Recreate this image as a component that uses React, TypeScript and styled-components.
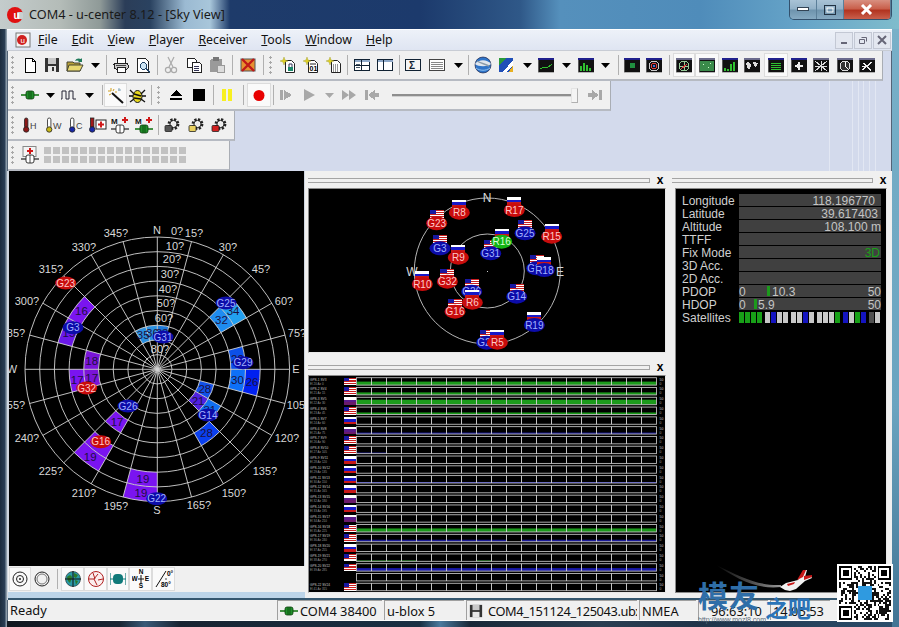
import React from "react";
import styled, { createGlobalStyle } from "styled-components";

const Global = createGlobalStyle`
  html, body { margin: 0; padding: 0; background: #000; }
  #root { width: 899px; height: 627px; }
`;

const UI = `"Noto Sans", "Liberation Sans", sans-serif`;

const Page = styled.div`
  position: relative;
  width: 899px;
  height: 627px;
  overflow: hidden;
  display: flex;
  flex-direction: column;
  font-family: ${UI};
  background:
    linear-gradient(90deg, #1c2c3e 0, #2a3e56 5px, #8a9aa8 6px, #8a9aa8 7px) 0 29px / 7px 100% no-repeat,
    linear-gradient(180deg, #78b0c8 0, #6aa4c0 60%, #3d6e8e 100%) 892px 29px / 7px 100% no-repeat,
    linear-gradient(90deg, #10161e 0, #1a2634 120px, #3a5a78 145px, #182432 180px, #1a3044 420px, #4a7a9e 440px, #182838 470px, #2a3e52 600px, #20344a 700px, #2c4e6c 899px) 0 621px / 100% 6px no-repeat,
    linear-gradient(90deg, #c4cccc 0, #b4bcb8 60px, #8f9a98 100px, #2b3d58 125px, #2a4260 150px, #9bbad2 185px, #a8c6da 210px, #1e3b6a 230px, #1c3a6c 420px, #2f5888 520px, #5590bc 560px, #4f8cba 700px, #66a4c8 800px, #7fbccc 899px);
`;

const TitleBar = styled.div`
  height: 29px;
  display: flex;
  align-items: flex-start;
  padding: 7px 7px 0 7px;
  box-sizing: border-box;
`;
const TitleText = styled.span`
  margin-left: 6px;
  margin-top: -1px;
  font-size: 12.7px;
  line-height: 16px;
  color: #1a1a1a;
`;
const CaptionGroup = styled.div`
  position: absolute;
  left: 789px;
  top: 0;
  width: 103px;
  height: 20px;
  display: flex;
  border: 1px solid #33506c;
  border-top: none;
  border-radius: 0 0 5px 5px;
  box-sizing: border-box;
  overflow: hidden;
`;
const CaptionBtn = styled.div<{ $w: number; $close?: boolean }>`
  width: ${(p) => p.$w}px;
  display: flex;
  align-items: center;
  justify-content: center;
  border-right: 1px solid #5b7f99;
  box-sizing: border-box;
  background: ${(p) =>
    p.$close
      ? "linear-gradient(180deg,#d88f80 0,#c9604c 45%,#b23420 55%,#c9604c 100%)"
      : "linear-gradient(180deg,#a9c3d6 0,#93b2c8 45%,#6f94ae 55%,#86aac2 100%)"};
`;

const Client = styled.div`
  flex: 1;
  margin: 0 7px 6px 7px;
  display: flex;
  flex-direction: column;
  min-height: 0;
  background:
    linear-gradient(90deg, transparent 822px, #e2e7f3 822px, #e2e7f3 823px, transparent 823px, transparent 845px, #e2e7f3 845px, #e2e7f3 846px, transparent 846px, transparent 851px, #e2e7f3 851px, #e2e7f3 852px, transparent 852px, transparent 856px, #e2e7f3 856px, #e2e7f3 857px, transparent 857px, transparent 862px, #e2e7f3 862px, #e2e7f3 863px, transparent 863px, transparent 868px, #e2e7f3 868px, #e2e7f3 869px, transparent 869px),
    #d3daec;
  border-top: 1px solid #ffffff;
  box-shadow: 0 0 0 1px rgba(30, 50, 70, 0.7) inset;
`;
const MenuBar = styled.div`
  height: 21px;
  flex: none;
  display: flex;
  align-items: center;
  padding-left: 8px;
  background: linear-gradient(180deg, #edf1f8 0, #dfe5f2 100%);
  border-bottom: 1px solid #c8ccd4;
  box-sizing: border-box;
  position: relative;
`;
const MenuItem = styled.span`
  margin-left: 14px;
  font-size: 12.3px;
  color: #111;
  line-height: 16px;
  &:first-of-type { margin-left: 6px; }
  u { text-decoration-thickness: 1px; text-underline-offset: 1px; }
`;
const MdiButtons = styled.div`
  margin-left: auto;
  margin-right: 1px;
  display: flex;
  gap: 1px;
`;
const MdiBtn = styled.div`
  width: 18px;
  height: 17px;
  display: flex;
  align-items: center;
  justify-content: center;
  background: #e3e7f0;
  border: 1px solid #c3c8d4;
  box-sizing: border-box;
`;

const ToolbarBand = styled.div`
  height: 30px;
  flex: none;
  margin-left: 1px;
  display: flex;
`;
const Toolbar = styled.div<{ $w: number }>`
  width: ${(p) => p.$w}px;
  display: flex;
  align-items: center;
  background: #f0f0f0;
  border-right: 1px solid #a9adb4;
  border-bottom: 2px solid #b6bac2;
  box-sizing: border-box;
`;
const Grip = styled.div`
  width: 11px;
  height: 20px;
  flex: none;
  margin-left: 0;
  background-image: radial-gradient(circle at 1.5px 1.5px, #a8a8a8 1px, transparent 1.2px);
  background-size: 3px 5px;
  background-position: 3px 1px;
  background-repeat: repeat-y;
`;
const Cell = styled.div<{ $w: number; $on?: boolean }>`
  width: ${(p) => p.$w}px;
  height: 24px;
  flex: none;
  display: flex;
  align-items: center;
  justify-content: center;
  box-sizing: border-box;
  ${(p) => p.$on && "background:#fafafa; box-shadow: inset 0 0 0 1px #dcdcdc;"}
`;
const Sep = styled.div<{ $w: number }>`
  width: ${(p) => p.$w}px;
  height: 20px;
  flex: none;
  position: relative;
  &::after {
    content: "";
    position: absolute;
    left: 50%;
    top: 0;
    bottom: 0;
    width: 1px;
    background: #b0b0b0;
  }
`;
const SliderTrack = styled.div`
  position: relative;
  width: 186px;
  height: 2px;
  margin: 0 9px 0 8px;
  flex: none;
  background: #8e8e8e;
  border-bottom: 1px solid #d0d0d0;
`;
const SliderThumb = styled.div`
  position: absolute;
  right: 0;
  top: -6px;
  width: 5px;
  height: 13px;
  background: #f4f4f4;
  border: 1px solid #b0b0b0;
  border-left-color: #e4e4e4;
  border-top-color: #e4e4e4;
`;
const DotGrid = styled.div`
  display: grid;
  grid-template-columns: repeat(16, 7px);
  grid-auto-rows: 7px;
  gap: 2px;
  margin-left: 4px;
`;
const Dot = styled.div`
  background: #c2c2c2;
`;

const Body = styled.div`
  flex: 1;
  min-height: 0;
  display: flex;
`;
const SkyCol = styled.div`
  width: 298px;
  flex: none;
  margin-left: 0;
  display: flex;
  flex-direction: column;
  padding-left: 2px;
  box-sizing: border-box;
  background: #cfd6e0;
`;
const Canvas = styled.svg`
  display: block;
  background: #000;
  flex: none;
`;
const SkyTools = styled.div`
  height: 26px;
  flex: none;
  margin-left: -1px;
  display: flex;
  align-items: center;
  background: #f0f0f0;
  padding-left: 1px;
`;
const Band = styled.div`
  flex: 1;
  margin-left: -1px;
  background: #bcd4e8;
  border-bottom: 2px solid #34566e;
  box-sizing: border-box;
`;
const SideCol = styled.div<{ $w?: number }>`
  ${(p) => (p.$w ? `width:${p.$w}px; flex:none;` : "flex:1;")}
  display: flex;
  flex-direction: column;
  background: #f0f0f0;
  padding: 1px 3px 0 3px;
  border-bottom: 2px solid #34566e;
  box-sizing: border-box;
`;
const PaneHeader = styled.div`
  height: 16px;
  flex: none;
  display: flex;
  align-items: center;
  gap: 4px;
`;
const GripLines = styled.div`
  flex: 1;
  height: 3px;
  border-top: 1px solid #a4a4a4;
  border-bottom: 1px solid #a4a4a4;
  border-right: 1px solid #a4a4a4;
`;
const CloseX = styled.span`
  width: 12px;
  font: bold 12px/12px "Liberation Sans", sans-serif;
  color: #000;
  text-align: center;
  flex: none;
`;
const PaneCanvas = styled.div<{ $h: number }>`
  height: ${(p) => p.$h}px;
  flex: none;
  background: #000;
  border: 1px solid #8a8a8a;
  border-right-color: #e8e8e8;
  border-bottom-color: #e8e8e8;
  box-sizing: border-box;
  overflow: hidden;
`;
const Spacer = styled.div<{ $h: number }>`
  height: ${(p) => p.$h}px;
  flex: none;
`;

const DataPanel = styled.div`
  width: 212px;
  margin-left: 3px;
  height: 405px;
  flex: none;
  background: #000;
  border: 1px solid #8a8a8a;
  border-right-color: #e8e8e8;
  box-sizing: border-box;
  padding: 5px 0 0 6px;
  display: flex;
  flex-direction: column;
  gap: 1px;
`;
const DataRow = styled.div`
  display: flex;
  height: 12px;
  align-items: center;
`;
const DataLabel = styled.span`
  width: 57px;
  flex: none;
  padding-top: 1px;
  font: 12px/12px "Liberation Sans", sans-serif;
  color: #d0d0d0;
`;
const DataField = styled.div<{ $pad?: number; $color?: string }>`
  width: 142px;
  height: 12px;
  background: #404040;
  display: flex;
  align-items: center;
  justify-content: flex-end;
  padding-right: ${(p) => p.$pad ?? 0}px;
  padding-top: 1px;
  box-sizing: border-box;
  font: 12px/12px "Liberation Sans", sans-serif;
  color: ${(p) => p.$color ?? "#c4c4c4"};
`;
const GaugeField = styled(DataField)`
  position: relative;
  justify-content: space-between;
`;
const GaugeBar = styled.span<{ $x: number }>`
  position: absolute;
  left: ${(p) => p.$x}px;
  top: 1px;
  width: 3px;
  height: 10px;
  background: #1c9a1c;
`;
const GaugeValue = styled.span<{ $x: number }>`
  position: absolute;
  left: ${(p) => p.$x}px;
  top: 1px;
`;
const SatStrip = styled.div`
  display: flex;
  gap: 3px;
`;
const SatGroup = styled.div`
  display: flex;
  gap: 1px;
`;
const SatTick = styled.div<{ $c: string }>`
  width: 5px;
  height: 11px;
  background: ${(p) => p.$c};
`;

const StatusBar = styled.div`
  height: 21px;
  flex: none;
  display: flex;
  margin-left: 1px;
  background: #f0f0f0;
  border-bottom: 1px solid #fff;
  box-sizing: border-box;
  align-items: stretch;
  font-size: 12.8px;
  color: #111;
`;
const StatusPane = styled.div<{ $w: number; $first?: boolean; $pad?: number; $gap?: number }>`
  width: ${(p) => p.$w}px;
  flex: none;
  display: flex;
  align-items: center;
  gap: ${(p) => p.$gap ?? 4}px;
  box-sizing: border-box;
  padding-left: ${(p) => p.$pad ?? 2}px;
  margin-right: 2px;
  white-space: nowrap;
  overflow: hidden;
  ${(p) => !p.$first && "border-left:1px solid #a0a0a0; border-top:1px solid #a0a0a0;"}
`;
const FileName = styled.span`
  letter-spacing: -0.36px;
`;
const FileIcon = styled.svg`
  flex: none;
`;

const Watermark = styled.div`
  position: absolute;
  left: 696px;
  top: 562px;
  width: 203px;
  height: 65px;
  pointer-events: none;
`;
const MarkBig = styled.span`
  position: absolute;
  left: 2px;
  top: 14px;
  font: 700 30px/36px "Noto Sans CJK SC", sans-serif;
  color: #2f6ea8;
  letter-spacing: 1px;
  white-space: nowrap;
`;
const MarkSmall = styled.span`
  position: absolute;
  left: 69px;
  top: 31px;
  font: 700 23px/28px "Noto Sans CJK SC", sans-serif;
  color: #2b74b8;
  white-space: nowrap;
`;
const MarkUrl = styled.span`
  position: absolute;
  left: 2px;
  top: 53px;
  font: 7px/9px "Liberation Sans", sans-serif;
  color: #5a6a78;
  white-space: nowrap;
`;
const PlaneArt = styled.svg`
  position: absolute;
  left: 0;
  top: 0;
`;
const QrBox = styled.svg`
  position: absolute;
  left: 141px;
  top: 2px;
`;

/* ---------- icons ---------- */
const Ic: React.FC<{ s?: number; children: React.ReactNode }> = ({ s = 16, children }) => (
  <svg width={s} height={s} viewBox="0 0 16 16" shapeRendering="crispEdges">
    {children}
  </svg>
);
const Arrow = () => (
  <svg width="9" height="5" viewBox="0 0 9 5">
    <path d="M0 0h9L4.5 5z" fill="#000" />
  </svg>
);
const GrayArrow = () => (
  <svg width="9" height="5" viewBox="0 0 9 5">
    <path d="M0 0h9L4.5 5z" fill="#a8a8a8" />
  </svg>
);
const Win: React.FC<{ children?: React.ReactNode; t?: string }> = ({ children, t = "#20208c" }) => (
  <Ic>
    <rect x="0" y="1" width="16" height="14" fill="#111" stroke="#8a8a8a" strokeWidth="0.6" />
    <rect x="0" y="1" width="16" height="2" fill={t} />
    {children}
  </Ic>
);
const Page16: React.FC<{ children?: React.ReactNode }> = ({ children }) => (
  <svg width="18" height="17" viewBox="0 0 18 17">
    <path d="M6.500 3.500h6l3 3v9h-9z" fill="#fff" stroke="#222" />
    <path d="M5 0l1 3 3 1-3 1-1 3-1-3-3-1 3-1z" fill="#e0d020" stroke="#9a9a30" strokeWidth="0.4" />
    {children}
  </svg>
);
const Thermo: React.FC<{ c: string; l?: string }> = ({ c, l }) => (
  <svg width="18" height="16" viewBox="0 0 18 16">
    <rect x="2.5" y="1" width="3.4" height="10" rx="1.7" fill={l === "H" ? c : "#fff"} stroke="#222" strokeWidth="0.8" />
    <circle cx="4.2" cy="12.5" r="2.7" fill={c} stroke="#222" strokeWidth="0.8" />
    {l && (
      <text x="8" y="12" fontSize="9" fontFamily="Liberation Sans" fill="#444">
        {l}
      </text>
    )}
  </svg>
);
const Conn: React.FC = () => (
  <svg width="18" height="10" viewBox="0 0 18 10">
    <path d="M0 5h18" stroke="#1a7a1a" strokeWidth="1.6" />
    <rect x="5" y="1" width="8" height="8" rx="2" fill="#1f8f2a" stroke="#0a3a0a" strokeWidth="0.8" />
    <path d="M8 1.5v7M10 1.5v7" stroke="#0a3a0a" strokeWidth="0.7" />
  </svg>
);
const Plug: React.FC = () => (
  <svg width="18" height="10" viewBox="0 0 18 10">
    <path d="M0 5h18" stroke="#222" strokeWidth="1.2" />
    <rect x="5" y="1" width="8" height="8" rx="2" fill="#fff" stroke="#222" strokeWidth="0.9" />
    <path d="M9 1v8" stroke="#222" strokeWidth="0.8" />
  </svg>
);
const Plus = ({ x = 0, y = 0 }) => <path d={`M${x + 2} ${y}h2v2h2v2h-2v2h-2v-2h-2v-2h2z`} fill="#d01818" />;
const Gear: React.FC<{ c: string }> = ({ c }) => (
  <svg width="18" height="16" viewBox="0 0 18 16">
    <circle cx="10.500" cy="7" r="4.600" fill="none" stroke="#222" strokeWidth="2.600" strokeDasharray="2.200 1.400" />
    <circle cx="10.500" cy="7" r="3.600" fill="none" stroke="#222" strokeWidth="1" />
    <circle cx="10.500" cy="7" r="1.400" fill="#e8e8e8" />
    <rect x="2" y="8.500" width="7" height="6" rx="1" fill={c} stroke="#222" strokeWidth="0.8" />
  </svg>
);

const icons: Record<string, React.ReactNode> = {
  doc: <Ic><path d="M3 1h7l3 3v11H3z" fill="#fff" stroke="#000" /><path d="M10 1v3h3" fill="none" stroke="#000" /></Ic>,
  save: <Ic><rect x="1" y="1" width="14" height="14" fill="#333" /><rect x="4" y="1" width="8" height="6" fill="#c8c8c8" /><rect x="4" y="9" width="8" height="6" fill="#e8e8e8" /><rect x="8" y="10" width="2" height="4" fill="#333" /></Ic>,
  open: <svg width="18" height="16" viewBox="0 0 18 16"><path d="M1 5h6l1 1h6v8H1z" fill="#b8a038" stroke="#443" /><path d="M3 8h14l-3 6H1z" fill="#e8d870" stroke="#443" /><path d="M9 4c1-3 4-3 6-2l1-1v4h-4l1-1c-1-.7-3-.7-4 0z" fill="#1f7a5a" /></svg>,
  print: <Ic><path d="M4 1h8v5H4z" fill="#fff" stroke="#222" /><rect x="1" y="6" width="14" height="6" rx="1.5" fill="#ccc" stroke="#222" /><path d="M4 10h8v5H4z" fill="#fff" stroke="#222" /><path d="M3 8h10" stroke="#444" /></Ic>,
  preview: <Ic><path d="M2 1h8l3 3v11H2z" fill="#fff" stroke="#222" /><circle cx="8.5" cy="9" r="3.2" fill="#cfe6f4" stroke="#246" /><path d="M11 11.5l4 4" stroke="#246" strokeWidth="2" /></Ic>,
  cut: <svg width="16" height="18" viewBox="0 0 16 18"><path d="M5 1l5 10M11 1L6 11" stroke="#aaa" strokeWidth="1.2" fill="none" /><circle cx="5" cy="14" r="2.6" fill="none" stroke="#aaa" strokeWidth="1.2" /><circle cx="11" cy="14" r="2.6" fill="none" stroke="#aaa" strokeWidth="1.2" /></svg>,
  copy: <Ic><path d="M1 1h7l2 2v7H1z" fill="#fff" stroke="#222" /><path d="M6 5h7l2 2v8H6z" fill="#fff" stroke="#222" /><path d="M8 9h5M8 11h5M8 13h5" stroke="#335" /></Ic>,
  paste: <Ic><rect x="1" y="2" width="12" height="13" rx="2" fill="#9a9a9a" /><rect x="4" y="0" width="6" height="4" rx="1" fill="#777" /><rect x="8" y="8" width="7" height="7" fill="#dcdcdc" stroke="#999" /></Ic>,
  kill: <svg width="18" height="16" viewBox="0 0 18 16"><rect x="2" y="2" width="14" height="12" fill="#e89030" stroke="#555" /><path d="M3 2l12 12M15 2L3 14" stroke="#c01818" strokeWidth="2.4" /></svg>,
  new1: <Page16><rect x="9" y="10" width="5" height="4" fill="#1c8a6c" /><path d="M10 10V7h3v3" fill="none" stroke="#335" /></Page16>,
  new2: <Page16><text x="7.500" y="14" fontSize="7" fontFamily="Liberation Sans" fontWeight="700" fill="#000">01</text><path d="M8 7h6" stroke="#222" /></Page16>,
  new3: <Page16><path d="M8 8h6M8 10h6M8 12h6M8 14h6" stroke="#333" strokeDasharray="1 1" /></Page16>,
  lay1: <Ic><rect x="0.5" y="2.5" width="15" height="11" fill="#fff" stroke="#123" /><rect x="0.5" y="2.5" width="15" height="2" fill="#8ea8c8" /><path d="M7 3v10M1 8h14" stroke="#123" /><path d="M2 7h4M2 10h4" stroke="#456" /></Ic>,
  lay2: <Ic><rect x="0.5" y="2.5" width="15" height="11" fill="#fff" stroke="#123" /><rect x="0.5" y="2.5" width="15" height="2" fill="#8ea8c8" /><path d="M6 3v10" stroke="#123" /></Ic>,
  sigma: <Ic><rect x="0.5" y="2.5" width="15" height="11" fill="#f4f4f4" stroke="#123" /><text x="4" y="12" fontSize="10" fontFamily="Liberation Sans" fontWeight="700" fill="#123">Σ</text></Ic>,
  table: <Ic><rect x="0.5" y="2.5" width="15" height="11" fill="#fff" stroke="#444" /><path d="M2 5h12M2 7h12M2 9h12M2 11h12" stroke="#888" /></Ic>,
  globe: <svg width="18" height="18" viewBox="0 0 18 18"><circle cx="9" cy="9" r="8" fill="#2f74c8" stroke="#113" strokeWidth="0.6" /><path d="M1 8c4-5 12-5 16 0-3 3-13 3-16 0z" fill="#dfe6ee" /><path d="M3 5c3 2 8 3 12 5" stroke="#8a9aa8" strokeWidth="1.4" fill="none" /><path d="M2 12c4 3 10 3 14 0" stroke="#8ec0f0" strokeWidth="1" fill="none" /></svg>,
  map: <Ic><rect x="1" y="1" width="14" height="14" fill="#1f4fb8" /><path d="M1 1h7L1 9z" fill="#2a9a3a" /><path d="M5 15L15 3v5l-6 7z" fill="#fff" /><path d="M15 8v7h-4z" fill="#e8b020" /></Ic>,
  wchart: <Win><path d="M2 12l4-2 3 1 5-4" stroke="#30c030" fill="none" /></Win>,
  wbars: <Win><path d="M3 14V9M6 14V6M9 14V8M12 14V11" stroke="#30c030" strokeWidth="2" /></Win>,
  wdot: <Win><rect x="6" y="6" width="5" height="5" fill="#209040" /></Win>,
  wsky: <Win><circle cx="8" cy="9" r="5" fill="none" stroke="#ccc" /><circle cx="8" cy="9" r="2.6" fill="none" stroke="#e04040" /><circle cx="8" cy="9" r="1" fill="#4070e0" /></Win>,
  wpolar: <Win t="#6a6a8c"><circle cx="8" cy="9" r="5" fill="none" stroke="#9c9" /><path d="M3 9h10M8 4v10" stroke="#9c9" /><path d="M5 12l6-5" stroke="#e04040" /></Win>,
  wgreen: <Win t="#6a6a8c"><rect x="1" y="4" width="14" height="10" fill="#3a8a4a" /><path d="M4 7h1M9 10h1M11 6h1" stroke="#cfc" /></Win>,
  wbars2: <Win><path d="M3 14v-3M6 14v-2M9 14V7M12 14V5" stroke="#30c030" strokeWidth="2.2" /></Win>,
  wworld: <Win t="#6a6a8c"><path d="M2 6c3-2 5 0 5 3l-2 4-2-3zM9 5l5 1-2 4-2-1z" fill="#ddd" /></Win>,
  wlist: <Win><path d="M3 6h10M3 8h10M3 10h10M3 12h10" stroke="#30c030" /></Win>,
  wstar: <Win><path d="M8 4l1.5 3.5L13 9l-3.5 1.5L8 14l-1.5-3.5L3 9l3.5-1.5z" fill="#eee" /></Win>,
  wburst: <Win t="#6a6a8c"><path d="M2 4l12 10M14 4L2 14M8 4v10M2 9h12" stroke="#ddd" /></Win>,
  wclock: <Win t="#6a6a8c"><circle cx="8" cy="9" r="5" fill="#333" stroke="#ddd" /><path d="M8 9V5M8 9l3 3" stroke="#fff" /></Win>,
  wx: <Win t="#6a6a8c"><path d="M3 13L13 5M4 6l8 7" stroke="#eee" strokeWidth="1.4" /><path d="M3 9h4" stroke="#eee" /></Win>,
  conn: <Conn />,
  pulse: <svg width="16" height="10" viewBox="0 0 16 10"><path d="M0 9h1V1h4v8h3V1h4v8h3" fill="none" stroke="#223" strokeWidth="1" /></svg>,
  wand: <svg width="17" height="17" viewBox="0 0 17 17"><path d="M5 6l11 10" stroke="#111" strokeWidth="2" /><path d="M4 1v3M1 4h3M7 2l-1 2M10 5l-2 0M2 8l2-1" stroke="#d0a020" strokeWidth="1" /><path d="M11 3h3M12 1v3" stroke="#8ab" /></svg>,
  bug: <svg width="17" height="17" viewBox="0 0 17 17"><ellipse cx="8.5" cy="9.5" rx="4.5" ry="6" fill="#e8d820" stroke="#111" /><path d="M1 3l4 4M16 3l-4 4M1 15l4-3M16 15l-4-3M0 9h4M13 9h4" stroke="#111" strokeWidth="1.3" /><path d="M5 7l7 2M5 11l7 1" stroke="#111" strokeWidth="1.4" /></svg>,
  eject: <Ic><path d="M8 3l6 6H2z" fill="#000" /><rect x="2" y="11" width="12" height="2.4" fill="#000" /></Ic>,
  stop: <Ic><rect x="2" y="2" width="12" height="12" fill="#000" /></Ic>,
  pause: <Ic><rect x="3" y="2" width="4" height="12" fill="#f8f020" /><rect x="9" y="2" width="4" height="12" fill="#f8f020" /></Ic>,
  rec: <svg width="16" height="16" viewBox="0 0 16 16"><circle cx="8" cy="8.5" r="5.5" fill="#e80000" /></svg>,
  step: <Ic><rect x="2" y="3" width="2.5" height="10" fill="#a8a8a8" /><path d="M6 3l8 5-8 5z" fill="#a8a8a8" /></Ic>,
  play: <svg width="16" height="16" viewBox="0 0 16 16"><path d="M3 2l11 6-11 6z" fill="#a8a8a8" /></svg>,
  gdrop: <GrayArrow />,
  ff: <svg width="16" height="16" viewBox="0 0 16 16"><path d="M1 3l7 5-7 5zM8 3l7 5-7 5z" fill="#a8a8a8" /></svg>,
  rew: <Ic><rect x="1" y="3" width="2.5" height="10" fill="#a8a8a8" /><path d="M11 3v3h4v4h-4v3L4 8z" fill="#a8a8a8" /></Ic>,
  end: <Ic><rect x="12" y="3" width="2.5" height="10" fill="#a8a8a8" /><path d="M5 3v3H1v4h4v3l7-5z" fill="#a8a8a8" /></Ic>,
  thH: <Thermo c="#8a1818" l="H" />,
  thW: <Thermo c="#c8b818" l="W" />,
  thC: <Thermo c="#1828a8" l="C" />,
  thP: <svg width="18" height="16" viewBox="0 0 18 16"><rect x="1.5" y="1" width="3.4" height="9" fill="#a01818" stroke="#222" strokeWidth="0.8" /><circle cx="3.2" cy="12.5" r="2.7" fill="#1828a8" stroke="#222" strokeWidth="0.8" /><rect x="7" y="3" width="10" height="9" fill="#fff" stroke="#222" /><g transform="translate(9 4.500)"><Plus /></g></svg>,
  mp1: <svg width="18" height="18" viewBox="0 0 18 18"><text x="0" y="8" fontSize="8" fontFamily="Liberation Sans" fontWeight="700" fill="#111">M</text><g transform="translate(11 1)"><Plus /></g><g transform="translate(0 8)"><Plug /></g></svg>,
  mp2: <svg width="18" height="18" viewBox="0 0 18 18"><text x="0" y="8" fontSize="8" fontFamily="Liberation Sans" fontWeight="700" fill="#111">M</text><g transform="translate(11 1)"><Plus /></g><g transform="translate(0 8)"><Conn /></g></svg>,
  g1: <Gear c="#555" />,
  g2: <Gear c="#e8d060" />,
  g3: <Gear c="#d02020" />,
  addPlug: <svg width="18" height="18" viewBox="0 0 18 18"><rect x="2" y="0.500" width="13" height="10" fill="#f4f4f4" stroke="#888" /><g transform="translate(6 2)"><Plus /></g><g transform="translate(0 8)"><Plug /></g></svg>,
  rings: <svg width="16" height="16" viewBox="0 0 16 16"><circle cx="8" cy="8" r="7" fill="none" stroke="#222" /><circle cx="8" cy="8" r="3.5" fill="none" stroke="#222" /><circle cx="8" cy="8" r="1" fill="#222" /></svg>,
  ring2: <svg width="16" height="16" viewBox="0 0 16 16"><circle cx="8" cy="8" r="7" fill="none" stroke="#222" /><circle cx="8" cy="8" r="5" fill="none" stroke="#777" /></svg>,
  earth: <svg width="16" height="16" viewBox="0 0 16 16"><circle cx="8" cy="8" r="7.500" fill="#2a9aa8" stroke="#222" strokeWidth="0.6" /><path d="M2 6c3-3 5-2 5 1l-2 5-2-2zM9 2l4 2-2 3-2-1zM10 9l3 1-2 4z" fill="#2a7a2a" /><path d="M8 0v16M0 8h16" stroke="#111" strokeWidth="1" /></svg>,
  redball: <svg width="16" height="16" viewBox="0 0 16 16"><circle cx="8" cy="8" r="7.500" fill="#fbeeee" stroke="#b02020" /><path d="M1 8h5l4-5M6 8l3 6M10 9l5-1M5 2l2 6" stroke="#b02020" fill="none" /></svg>,
  teal: <svg width="16" height="14" viewBox="0 0 16 14"><path d="M0 1v12M16 1v12M0 7h16" stroke="#107a7a" strokeWidth="1.2" /><rect x="3" y="2" width="10" height="10" rx="4" fill="#107a7a" /></svg>,
  compass: <svg width="18" height="20" viewBox="0 0 18 20" fontFamily="Liberation Sans" fontWeight="700" fontSize="6.500" textAnchor="middle"><text x="9" y="5">N</text><text x="2.500" y="12">W</text><text x="15" y="12">E</text><text x="9" y="19">S</text><path d="M9 6v8M6 10h6" stroke="#111" /></svg>,
  angle: <svg width="20" height="20" viewBox="0 0 20 20" fontFamily="Liberation Sans" fontSize="6.500" fontWeight="700"><path d="M2 18L12 2" stroke="#111" /><text x="13" y="7">0°</text><text x="7" y="18">80°</text><circle cx="12" cy="10" r="0.7" /></svg>,
  logo: <svg width="17" height="17" viewBox="0 0 17 17"><rect x="1" y="1" width="14" height="14" fill="#f4f4f4" stroke="#777" /><circle cx="7" cy="8" r="5" fill="#d02020" /><text x="5.400" y="11" fontSize="8" fontFamily="Liberation Sans" fill="#fff">u</text></svg>,
};

type Item = [string, number, boolean?] | number;
const bar1: Item[] = [
  ["doc", 22], ["save", 22], ["open", 24], ["arrow", 16], 6, ["print", 23], ["preview", 22], 6, ["cut", 22], ["copy", 24], ["paste", 22], 8, ["kill", 24], 6,
];
const bar1b: Item[] = [
  ["new1", 21], ["new2", 25], ["new3", 22], 4, ["lay1", 25], ["lay2", 22], 6, ["sigma", 22], ["table", 26], ["arrow", 16], 4, ["globe", 26], ["map", 20], ["arrow", 22], ["wchart", 16], ["arrow", 24], ["wbars", 16], ["arrow", 22], 4, ["wdot", 24], ["wsky", 20], 9, ["wpolar", 22, true], ["wgreen", 24, true], ["wbars2", 21], ["wworld", 24], ["wlist", 24, true], ["wstar", 21], ["wburst", 24], ["wclock", 23], ["wx", 22],
];
const bar2: Item[] = [
  ["conn", 22], ["arrow", 18], ["pulse", 20], ["arrow", 21], 4, ["wand", 23, true], ["bug", 21], 6,
];
const bar2b: Item[] = [
  ["eject", 22], ["stop", 24], 4, ["pause", 24], 8, ["rec", 24, true], 3, ["step", 24], ["play", 22], ["gdrop", 18], ["ff", 22], ["rew", 24],
];
const bar3: Item[] = [
  ["thH", 23], ["thW", 23], ["thC", 23], ["thP", 20], ["mp1", 24], ["mp2", 24], 4, ["g1", 24], ["g2", 23], ["g3", 24],
];
const barSky: Item[] = [
  ["rings", 22, true], ["ring2", 22], 8, ["earth", 23, true], ["redball", 23, true], ["teal", 22, true], ["compass", 23, true], ["angle", 23, true],
];
icons.arrow = <Arrow />;

const Items: React.FC<{ list: Item[] }> = ({ list }) => (
  <>
    {list.map((it, i) =>
      typeof it === "number" ? (
        <Sep key={i} $w={it} />
      ) : (
        <Cell key={i} $w={it[1]} $on={it[2]}>
          {icons[it[0]]}
        </Cell>
      )
    )}
  </>
);

/* ---------- polar plot ---------- */
const CX = 157.3;
const CY = 369.3;
const RING = 14.7;
const pt = (r: number, az: number): [number, number] => {
  const a = (az * Math.PI) / 180;
  return [CX + r * Math.sin(a), CY - r * Math.cos(a)];
};
const sector = (a1: number, a2: number, r1: number, r2: number) => {
  const [x1, y1] = pt(r2, a1);
  const [x2, y2] = pt(r2, a2);
  const [x3, y3] = pt(r1, a2);
  const [x4, y4] = pt(r1, a1);
  return `M${x1} ${y1}A${r2} ${r2} 0 0 1 ${x2} ${y2}L${x3} ${y3}A${r1} ${r1} 0 0 0 ${x4} ${y4}Z`;
};
const PURPLE = "#7a14f0";
const cells: [number, number, number, string, string][] = [
  [300, 6, 7, PURPLE, "16"],
  [285, 6, 7, "#6a18e8", "15"],
  [270, 4, 5, "#7a14d8", "18"],
  [255, 4, 5, "#7a14d8", "17"],
  [255, 5, 6, PURPLE, "17"],
  [330, 2, 3, "#2a90e0", "35"],
  [345, 2, 3, "#2a90e0", "36"],
  [0, 2, 3, "#1c78d8", "33"],
  [45, 5, 6, "#1f8cf0", "32"],
  [45, 6, 7, "#22a0f0", "34"],
  [75, 5, 6, "#0c50e8", "22"],
  [90, 5, 6, "#0e70f8", "30"],
  [90, 6, 7, "#0020f0", "26"],
  [105, 3, 4, "#1050e8", "28"],
  [120, 3, 4, "#5020e0", "21"],
  [120, 4, 5, "#1070f0", "31"],
  [135, 5, 6, "#0a40f0", "28"],
  [210, 4, 5, PURPLE, "17"],
  [210, 6, 7, PURPLE, ""],
  [210, 7, 8, PURPLE, "19"],
  [180, 7, 8, PURPLE, "19"],
  [180, 8, 9, PURPLE, "19"],
];
const polarSats: [string, number, number, string][] = [
  ["G23", 65.7, 283, "r"], ["G25", 226, 303, "b"], ["G3", 73, 327.7, "b"], ["G31", 163, 337, "b"], ["G29", 243, 362.7, "b"],
  ["G32", 86.7, 388, "r"], ["G26", 128, 406, "b"], ["G14", 208, 415, "b"], ["G16", 100.7, 441.7, "r"], ["G22", 156.7, 498.7, "b"],
];
const polarLabels: [string, number, number][] = [
  ["N", 157, 230], ["0?", 177, 231], ["15?", 194, 233], ["30?", 228, 247], ["45?", 261, 269], ["60?", 284, 301], ["75?", 297, 333], ["E", 296, 369],
  ["105?", 299, 405], ["120?", 287, 438], ["135?", 265, 471], ["150?", 234, 493], ["165?", 199, 505], ["S", 157, 510], ["195?", 116, 506], ["210?", 84, 493],
  ["225?", 51, 471], ["240?", 27, 438], ["255?", 13, 405], ["W", 12, 369], ["285?", 13, 333], ["300?", 27, 301], ["315?", 51, 269], ["330?", 84, 247], ["345?", 116, 233],
  ["10?", 175, 246], ["20?", 172, 259], ["30?", 170, 274], ["40?", 168, 289], ["50?", 166, 303], ["60?", 164, 318], ["80?", 160, 349],
];
const satFill: Record<string, [string, string]> = {
  r: ["#c80c0c", "#ffc8c8"],
  b: ["#0c0ca8", "#a0b0ff"],
  g: ["#14b414", "#d8ffd8"],
};

const Polar = () => (
  <Canvas width={295} height={395} viewBox="9 171 295 395" fontFamily="Liberation Sans">
    {cells.map(([a, r1, r2, c], i) => (
      <path key={i} d={sector(a, a + 15, r1 * RING, r2 * RING)} fill={c} />
    ))}
    <g stroke="#d4d4d4" strokeWidth="0.9" fill="none">
      {Array.from({ length: 9 }, (_, i) => (
        <circle key={i} cx={CX} cy={CY} r={(i + 1) * RING} />
      ))}
      {Array.from({ length: 24 }, (_, i) => {
        const [x, y] = pt(9 * RING, i * 15);
        return <line key={i} x1={CX} y1={CY} x2={x} y2={y} />;
      })}
    </g>
    {cells.map(([a, r1, r2, , t], i) => {
      const [x, y] = pt(((r1 + r2) / 2) * RING, a + 7.5);
      return (
        <text key={i} x={x} y={y + 4} fontSize="11.500" textAnchor="middle" fill="#1c1040">
          {t}
        </text>
      );
    })}
    {polarLabels.map(([t, x, y], i) => (
      <text key={i} x={x} y={y + 4} fontSize="11" textAnchor="middle" fill="#d8d8d8">
        {t}
      </text>
    ))}
    {polarSats.map(([t, x, y, k]) => (
      <g key={t}>
        <ellipse cx={x} cy={y} rx="10.500" ry="6.500" fill={satFill[k][0]} />
        <text x={x} y={y + 3.500} fontSize="10" textAnchor="middle" fill={satFill[k][1]}>
          {t}
        </text>
      </g>
    ))}
  </Canvas>
);

/* ---------- flags ---------- */
const FlagUS: React.FC<{ x: number; y: number; w?: number; h?: number }> = ({ x, y, w = 14, h = 8 }) => (
  <g shapeRendering="crispEdges">
    <rect x={x} y={y} width={w} height={h} fill="#fff" />
    {[0, 2, 4, 6].map((k) => (
      <rect key={k} x={x} y={y + (k * h) / 8} width={w} height={h / 8} fill="#c82020" />
    ))}
    <rect x={x} y={y} width={w * 0.45} height={h / 2} fill="#1818a0" />
  </g>
);
const FlagRU: React.FC<{ x: number; y: number; w?: number; h?: number; dark?: boolean }> = ({ x, y, w = 14, h = 8, dark }) => (
  <g shapeRendering="crispEdges">
    <rect x={x} y={y} width={w} height={h / 3} fill="#fff" />
    <rect x={x} y={y + h / 3} width={w} height={h / 3} fill={dark ? "#5a1a8a" : "#1818c8"} />
    <rect x={x} y={y + (2 * h) / 3} width={w} height={h / 3} fill={dark ? "#6a1a6a" : "#c81818"} />
  </g>
);

/* ---------- mini sky ---------- */
const mini: [string, number, number, string, "us" | "ru"][] = [
  ["G25", 660, 190, "b", "us"], ["R8", 463, 128, "r", "ru"], ["G23", 395, 160, "r", "us"], ["R17", 628, 120, "r", "ru"], ["R15", 740, 200, "r", "ru"],
  ["G3", 405, 235, "b", "us"], ["G31", 557, 250, "b", "us"], ["R16", 590, 215, "g", "ru"], ["R9", 460, 263, "r", "ru"], ["G29", 695, 295, "b", "us"],
  ["R18", 718, 300, "b", "ru"], ["R10", 352, 342, "r", "ru"], ["G32", 427, 335, "r", "us"], ["G26", 500, 365, "b", "us"], ["R6", 502, 398, "r", "ru"],
  ["G14", 635, 380, "b", "us"], ["G16", 450, 425, "r", "us"], ["R19", 688, 465, "b", "ru"], ["G22", 545, 518, "b", "us"], ["R5", 577, 518, "r", "ru"],
];
const MiniSky = () => (
  <Canvas width={355} height={163} viewBox="309 189 355 163" fontFamily="Liberation Sans">
    <g stroke="#c8c8c8" strokeWidth="0.9" fill="none">
      <circle cx="487.3" cy="271" r="73" />
      <circle cx="487.3" cy="271" r="37" />
    </g>
    <rect x="487" y="271" width="1" height="1" fill="#ccc" />
    {[["N", 487, 197], ["E", 560, 271], ["W", 412, 271]].map(([t, x, y]) => (
      <text key={t as string} x={x} y={(y as number) + 5} fontSize="12" textAnchor="middle" fill="#d8d8d8">
        {t}
      </text>
    ))}
    {mini.map(([t, zx, zy, k, fl]) => {
      const x = zx / 3 + 305;
      const y = zy / 3 + 170;
      return (
        <g key={t}>
          {fl === "us" ? <FlagUS x={x - 7} y={y - 13} /> : <FlagRU x={x - 7} y={y - 13} />}
          <ellipse cx={x} cy={y} rx="10.500" ry="7" fill={satFill[k][0]} />
          <text x={x} y={y + 3.500} fontSize="10" textAnchor="middle" fill={satFill[k][1]}>
            {t}
          </text>
        </g>
      );
    })}
  </Canvas>
);

/* ---------- signal bars ---------- */
type Row = { f: "us" | "ru" | ""; c?: string; h?: number; cols?: number[]; dark?: boolean };
const rows: Row[] = [
  { f: "us", c: "#1c9a1c", h: 3.5 }, { f: "us", c: "#1c9a1c", h: 2.5 }, { f: "ru", c: "#1c9a1c", h: 5, dark: true }, { f: "us", c: "#1c9a1c", h: 2 },
  { f: "ru" }, { f: "ru", c: "#1c1c9a", h: 1.5, dark: true }, { f: "us" }, { f: "us", c: "#2a2ab8", h: 1, cols: [0, 1] },
  { f: "ru" }, { f: "ru" }, { f: "ru", c: "#3030c8", h: 1 }, { f: "ru" },
  { f: "ru", dark: true }, { f: "ru" }, { f: "ru", dark: true }, { f: "us", c: "#1c9a1c", h: 3.5 },
  { f: "us", c: "#1c1c9a", h: 2, cols: [0,1,2,3,4,5,6,7,8,9,11,12,13,14,15,16,17,18,19] }, { f: "ru" }, { f: "us", c: "#1c7a1c", h: 1, cols: [0, 1, 2, 3, 8] }, { f: "us", c: "#1818a8", h: 3 },
  { f: "" }, { f: "us" },
];
const Bars = () => (
  <Canvas width={355} height={216} viewBox="309 377 355 216" fontFamily="Liberation Sans">
    {rows.map((r, i) => {
      const y = 378.7 + i * 9.79;
      const cols = r.cols ?? Array.from({ length: 20 }, (_, k) => k);
      return (
        <g key={i}>
          {r.f && (
            <>
              <text x="310" y={y + 3} fontSize="3.200" fill="#c8c8c8">GPS-{i + 1} SV{i + 3}</text>
              <text x="310" y={y + 7} fontSize="3" fill="#9a9a9a">El {20 + i} Az {i * 15}</text>
            </>
          )}
          {r.f === "us" && <FlagUS x={344} y={y} w={12} h={7.500} />}
          {r.f === "ru" && <FlagRU x={344} y={y} w={12} h={7.500} dark={r.dark} />}
          {r.c &&
            cols.map((k) => (
              <rect key={k} x={356.7 + k * 15} y={y + 7.400 - (r.h ?? 0)} width="15" height={r.h} fill={r.c} />
            ))}
          <rect x="356.500" y={y} width="300" height="7.400" fill="none" stroke="#bdbdbd" strokeWidth="0.9" />
          {Array.from({ length: 19 }, (_, k) => (
            <line key={k} x1={356.5 + (k + 1) * 15} x2={356.5 + (k + 1) * 15} y1={y} y2={y + 7.400} stroke="#d8d8d8" strokeWidth="0.9" />
          ))}
          <text x="659.500" y={y + 3} fontSize="3.400" fill="#d0d0d0">50</text>
          <text x="659.500" y={y + 7} fontSize="3.400" fill="#a0a0a0">0</text>
        </g>
      );
    })}
  </Canvas>
);

/* ---------- data ---------- */
const G = "#18a018";
const W = "#c8c8c8";
const B = "#1414c0";
const D = "#505050";
const satGroups = [
  [G, G, G, G], [W, B, W, W], [W, W, B, W], [W, W, W, G], [B, W, G, B], [D, W],
];
const fields: [string, string, number, string?][] = [
  ["Longitude", "118.196770", 6],
  ["Latitude", "39.617403", 3],
  ["Altitude", "108.100 m", 0],
  ["TTFF", "", 0],
  ["Fix Mode", "3D", 1, "#18a018"],
  ["3D Acc.", "", 0],
  ["2D Acc.", "", 0],
];

/* ---------- qr ---------- */
const qrMods = (() => {
  const n = 27;
  const out: [number, number][] = [];
  let seed = 12345;
  const rnd = () => {
    seed = (seed * 1103515245 + 12345) & 0x7fffffff;
    return (seed >> 16) & 1;
  };
  for (let y = 0; y < n; y++)
    for (let x = 0; x < n; x++) {
      const inF = (x < 8 && y < 8) || (x >= n - 8 && y < 8) || (x < 8 && y >= n - 8);
      if (!inF && rnd()) out.push([x, y]);
    }
  return out;
})();
const Finder: React.FC<{ x: number; y: number }> = ({ x, y }) => (
  <g>
    <rect x={x + 0.5} y={y + 0.5} width="6" height="6" fill="none" stroke="#000" />
    <rect x={x + 2} y={y + 2} width="3" height="3" fill="#000" />
  </g>
);

export default function App() {
  return (
    <Page>
      <Global />
      <TitleBar>
        <svg width="16" height="16" viewBox="0 0 16 16">
          <circle cx="8" cy="8" r="8" fill="#e01010" />
          <rect x="10" y="5" width="6" height="7" fill="#c8d0d0" rx="1" />
          <text x="6.500" y="12" fontSize="10" fontWeight="700" fontFamily="Liberation Sans" fill="#fff">u</text>
        </svg>
        <TitleText>COM4 - u-center 8.12 - [Sky View]</TitleText>
      </TitleBar>
      <CaptionGroup>
        <CaptionBtn $w={28}>
          <svg width="12" height="5" viewBox="0 0 12 5"><rect x="0.500" y="0.500" width="11" height="3" fill="#fff" stroke="#345" /></svg>
        </CaptionBtn>
        <CaptionBtn $w={27}>
          <svg width="12" height="10" viewBox="0 0 12 10"><rect x="0.500" y="0.500" width="11" height="9" fill="none" stroke="#234" /><rect x="3" y="3" width="6" height="4" fill="none" stroke="#fff" /></svg>
        </CaptionBtn>
        <CaptionBtn $w={48} $close>
          <svg width="13" height="11" viewBox="0 0 13 11"><path d="M2 1l9 9M11 1l-9 9" stroke="#fff" strokeWidth="3" /></svg>
        </CaptionBtn>
      </CaptionGroup>

      <Client>
        <MenuBar>
          {icons.logo}
          {[["F", "ile"], ["E", "dit"], ["V", "iew"], ["P", "layer"], ["R", "eceiver"], ["T", "ools"], ["W", "indow"], ["H", "elp"]].map(([a, b]) => (
            <MenuItem key={a}>
              <u>{a}</u>
              {b}
            </MenuItem>
          ))}
          <MdiButtons>
            <MdiBtn><svg width="8" height="8" viewBox="0 0 8 8"><rect x="1" y="6" width="6" height="2" fill="#667" /></svg></MdiBtn>
            <MdiBtn><svg width="10" height="10" viewBox="0 0 10 10"><path d="M3.500 2.500h5v4M1.500 4.500h5v4h-5z" fill="none" stroke="#667" /></svg></MdiBtn>
            <MdiBtn><svg width="10" height="10" viewBox="0 0 10 10"><path d="M1 1l8 8M9 1l-8 8" stroke="#667" strokeWidth="2" /></svg></MdiBtn>
          </MdiButtons>
        </MenuBar>

        <ToolbarBand>
          <Toolbar $w={875}>
            <Grip />
            <Items list={bar1} />
            <Grip />
            <Items list={bar1b} />
          </Toolbar>
        </ToolbarBand>
        <ToolbarBand>
          <Toolbar $w={603}>
            <Grip />
            <Items list={bar2} />
            <Grip />
            <Items list={bar2b} />
            <SliderTrack><SliderThumb /></SliderTrack>
            {icons.end}
          </Toolbar>
        </ToolbarBand>
        <ToolbarBand>
          <Toolbar $w={227}>
            <Grip />
            <Items list={bar3} />
          </Toolbar>
        </ToolbarBand>
        <ToolbarBand>
          <Toolbar $w={222}>
            <Grip />
            <Cell $w={21}>{icons.addPlug}</Cell>
            <DotGrid>
              {Array.from({ length: 32 }, (_, i) => <Dot key={i} />)}
            </DotGrid>
          </Toolbar>
        </ToolbarBand>

        <Body>
          <SkyCol>
            <Polar />
            <SkyTools>
              <Items list={barSky} />
            </SkyTools>
            <Band />
          </SkyCol>
          <SideCol $w={364}>
            <PaneHeader>
              <GripLines />
              <CloseX>x</CloseX>
            </PaneHeader>
            <PaneCanvas $h={165}><MiniSky /></PaneCanvas>
            <Spacer $h={6} />
            <PaneHeader>
              <GripLines />
              <CloseX>x</CloseX>
            </PaneHeader>
            <PaneCanvas $h={218}><Bars /></PaneCanvas>
          </SideCol>
          <SideCol>
            <PaneHeader>
              <GripLines />
              <CloseX>x</CloseX>
            </PaneHeader>
            <DataPanel>
              {fields.map(([l, v, pad, c]) => (
                <DataRow key={l}>
                  <DataLabel>{l}</DataLabel>
                  <DataField $pad={pad} $color={c}>{v}</DataField>
                </DataRow>
              ))}
              <DataRow>
                <DataLabel>PDOP</DataLabel>
                <GaugeField>
                  <span>0</span>
                  <GaugeBar $x={28} />
                  <GaugeValue $x={33}>10.3</GaugeValue>
                  <span>50</span>
                </GaugeField>
              </DataRow>
              <DataRow>
                <DataLabel>HDOP</DataLabel>
                <GaugeField>
                  <span>0</span>
                  <GaugeBar $x={15} />
                  <GaugeValue $x={19}>5.9</GaugeValue>
                  <span>50</span>
                </GaugeField>
              </DataRow>
              <DataRow>
                <DataLabel>Satellites</DataLabel>
                <SatStrip>
                  {satGroups.map((g, i) => (
                    <SatGroup key={i}>
                      {g.map((c, k) => <SatTick key={k} $c={c} />)}
                    </SatGroup>
                  ))}
                </SatStrip>
              </DataRow>
            </DataPanel>
          </SideCol>
        </Body>

        <StatusBar>
          <StatusPane $w={267} $first>Ready</StatusPane>
          <StatusPane $w={105} $gap={2}><Conn />COM4 38400</StatusPane>
          <StatusPane $w={80}>u-blox 5</StatusPane>
          <StatusPane $w={171} $gap={5}>
            <FileIcon width="14" height="14" viewBox="0 0 16 16"><rect x="1" y="1" width="14" height="14" fill="#333" /><rect x="4" y="1" width="8" height="6" fill="#c8c8c8" /><rect x="4" y="9" width="8" height="6" fill="#e8e8e8" /></FileIcon>
            <FileName>COM4_151124_125043.ubx</FileName>
          </StatusPane>
          <StatusPane $w={57}>NMEA</StatusPane>
          <StatusPane $w={70} $pad={12}>96:63:10</StatusPane>
          <StatusPane $w={60} $pad={2}>14:05:53</StatusPane>
        </StatusBar>
      </Client>

      <Watermark>
        <PlaneArt width="141" height="40" viewBox="0 0 141 40">
          <defs>
            <linearGradient id="sw" x1="0" x2="1">
              <stop offset="0" stopColor="#fff" stopOpacity="0" />
              <stop offset="0.5" stopColor="#ccc" stopOpacity="0.35" />
              <stop offset="1" stopColor="#fff" stopOpacity="0.6" />
            </linearGradient>
          </defs>
          <path d="M20 3C45 15 62 24 85 23L85 25C60 28 40 16 20 3z" fill="url(#sw)" />
          <path d="M84 25l6-4 12-3 6-10 3 0-2 7 6-1 1 2-7 3-9 8-6 2-5-1z" fill="#f2f2f2" />
          <path d="M101 18l6-10 3 0-3 7zM108 14l8-1 0 2-8 3zM91 22l8-2-1 2-6 2z" fill="#c81818" />
        </PlaneArt>
        <MarkBig>模友</MarkBig>
        <MarkSmall>之吧</MarkSmall>
        <MarkUrl>http://www.mozl8.com</MarkUrl>
        <QrBox width="56" height="58" viewBox="-1 -1 29 29" preserveAspectRatio="none" shapeRendering="crispEdges">
          <rect x="-1" y="-1" width="29" height="29" fill="#fff" />
          {qrMods.map(([x, y], i) => <rect key={i} x={x} y={y} width="1" height="1" fill="#111" />)}
          <Finder x={0} y={0} />
          <Finder x={20} y={0} />
          <Finder x={0} y={20} />
          <rect x="10" y="10" width="7" height="7" fill="#2f9ae0" />
        </QrBox>
      </Watermark>
    </Page>
  );
}
